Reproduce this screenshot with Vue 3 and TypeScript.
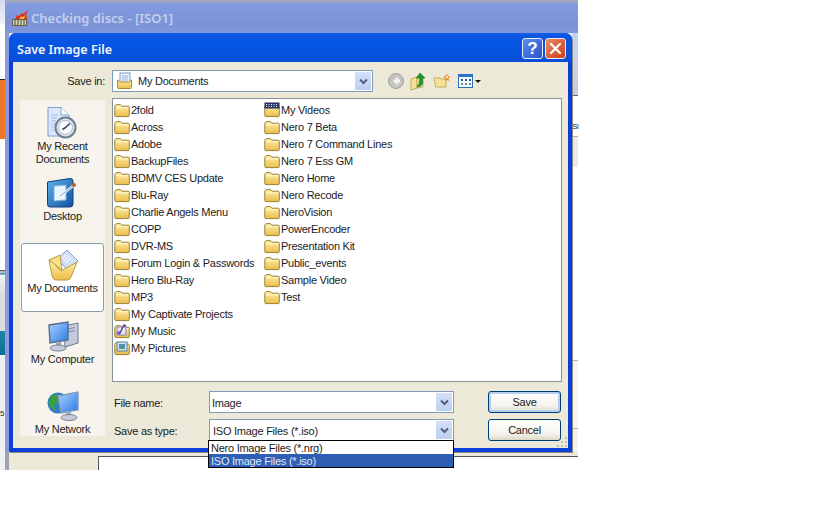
<script setup lang="ts">
type PlaceItem = { key: string; lines: string[]; height: number; active?: boolean };
type FileItem = { name: string; icon: string };

const places: PlaceItem[] = [
  { key: "recent", lines: ["My Recent", "Documents"], height: 70 },
  { key: "desktop", lines: ["Desktop"], height: 72 },
  { key: "docs", lines: ["My Documents"], height: 69, active: true },
  { key: "computer", lines: ["My Computer"], height: 70 },
  { key: "network", lines: ["My Network"], height: 52 },
];

const col = (names: string[]): FileItem[] => names.map((name) => ({ name, icon: "folder" }));

const columnOne: FileItem[] = [
  ...col([
    "2fold", "Across", "Adobe", "BackupFiles", "BDMV CES Update", "Blu-Ray",
    "Charlie Angels Menu", "COPP", "DVR-MS", "Forum Login & Passwords",
    "Hero Blu-Ray", "MP3", "My Captivate Projects",
  ]),
  { name: "My Music", icon: "music" },
  { name: "My Pictures", icon: "pictures" },
];

const columnTwo: FileItem[] = [
  { name: "My Videos", icon: "videos" },
  ...col([
    "Nero 7 Beta", "Nero 7 Command Lines", "Nero 7 Ess GM", "Nero Home", "Nero Recode",
    "NeroVision", "PowerEncoder", "Presentation Kit", "Public_events", "Sample Video", "Test",
  ]),
];

const fileTypes = ["Nero Image Files (*.nrg)", "ISO Image Files (*.iso)"];
</script>

<template>
  <div class="desktop">
    <svg class="defs" width="0" height="0" aria-hidden="true">
      <defs>
        <linearGradient id="fold" x1="0" y1="0" x2="0" y2="1">
          <stop offset="0" stop-color="#fff0a8" />
          <stop offset="1" stop-color="#ebbd4c" />
        </linearGradient>
        <linearGradient id="screen" x1="0" y1="0" x2="1" y2="1">
          <stop offset="0" stop-color="#a8d4ff" />
          <stop offset="1" stop-color="#2a78e4" />
        </linearGradient>
        <linearGradient id="tile" x1="0" y1="0" x2="1" y2="1">
          <stop offset="0" stop-color="#5cb4ec" />
          <stop offset="1" stop-color="#10509c" />
        </linearGradient>
        <symbol id="folder" viewBox="0 0 16 16">
          <path d="M.8 4.5V13.5Q.8 14.6 2 14.6H14.2Q15.3 14.6 15.3 13.5V5.2Q15.3 4.2 14.2 4.2H8L6.5 2.6H2.8L1.2 3.4Z" fill="url(#fold)" stroke="#9a8234" />
          <path d="M2 5.8H14.2" stroke="#fff8d8" />
        </symbol>
      </defs>
    </svg>

    <!-- bits of the window behind, left of the dialog -->
    <div class="strip-left">
      <div class="sl sl-white"></div>
      <div class="sl sl-orange"></div>
      <div class="sl sl-blank"></div>
      <div class="sl sl-grey"></div>
      <div class="sl sl-teal"></div>
      <div class="sl sl-pale"><span>5</span></div>
    </div>

    <div class="backwin">
      <div class="back-top"></div>
      <div class="back-title">
        <svg class="back-icon" width="18" height="18" viewBox="0 0 18 18">
          <path d="M4 10L6 6L8 7L11 4L12 5L17 1L15 6L16 9L15 13H4Z" fill="#e2301a" />
          <path d="M8 11L10 7L11 8.5L14 6L13 11Z" fill="#f8c040" />
          <rect x="1.5" y="10.5" width="14" height="6" fill="#ecd890" stroke="#6a5a40" />
          <path d="M4 11V16M7 11V16M10 11V16M13 11V16" stroke="#54708c" stroke-width="1.4" />
        </svg>
        <span>Checking discs - [ISO1]</span>
      </div>
      <div class="strip-right">
        <div class="sr sr-a"></div>
        <div class="sr sr-b"></div>
        <div class="sr sr-c"><span>Si</span></div>
        <div class="sr sr-d"></div>
        <div class="sr sr-e"></div>
        <div class="sr sr-f"></div>
        <div class="sr sr-g"></div>
      </div>
      <div class="back-box"></div>

      <div class="dialog">
        <div class="titlebar">
          <span class="title">Save Image File</span>
          <div class="cap-buttons">
            <button type="button" class="cap cap-help">?</button>
            <button type="button" class="cap cap-close">
              <svg width="13" height="13" viewBox="0 0 13 13">
                <path d="M2 2L11 11M11 2L2 11" stroke="#fff" stroke-width="2.2" stroke-linecap="round" />
              </svg>
            </button>
          </div>
        </div>

        <div class="client">
          <div class="savein-label">Save in:</div>
          <div class="toolbar">
            <div class="combo combo-look">
              <svg class="look-icon" width="18" height="18" viewBox="0 0 18 18">
                <rect x="4" y="1" width="10" height="11" fill="#eef4ff" stroke="#7d97c8" />
                <path d="M6 4H12M6 6H12M6 8H12" stroke="#9db4dc" />
                <path d="M1.5 8V15.5Q1.5 16.5 2.5 16.5H14.5Q15.5 16.5 15.5 15.5V8L13 10H4Z" fill="url(#fold)" stroke="#a98a3c" />
              </svg>
              <span class="combo-text">My Documents</span>
              <span class="arrow"><svg width="9" height="7" viewBox="0 0 9 7"><path d="M1 1.5L4.5 5L8 1.5" fill="none" stroke="#4d6185" stroke-width="2" /></svg></span>
            </div>
            <div class="tools">
              <svg width="18" height="18" viewBox="0 0 18 18">
                <circle cx="9" cy="9" r="7.5" fill="#c4c4c0" stroke="#a4a4a0" />
                <path d="M10.5 4.5L6 9L10.5 13.5V10.8H13V7.2H10.5Z" fill="#f4f4f0" />
              </svg>
              <svg width="18" height="19" viewBox="0 0 18 19">
                <path d="M1 7L7 5V16L1 18Z" fill="#f6e294" stroke="#c0aa54" />
                <path d="M7 5H13V15L7 16Z" fill="#f8ecb0" stroke="#c0aa54" />
                <path d="M10 1L15 6H12.5V12Q11 14.5 7 15Q10 12 9.5 6H6.5Z" fill="#1f9a2c" stroke="#0c6a1a" stroke-width=".6" />
              </svg>
              <svg width="18" height="16" viewBox="0 0 18 16">
                <path d="M1 5H7L8 6H13V14H2.5Z" fill="#f6e294" stroke="#c8ac60" />
                <path d="M14 0.5L15 3L17.5 3.5L15.5 5.5L16 8L14 7L12 8L12.2 5.5L10.5 3.5L13 3Z" fill="#f08030" />
                <circle cx="14" cy="4.2" r="1.2" fill="#fff4d0" />
              </svg>
              <div class="views">
                <svg width="15" height="14" viewBox="0 0 15 14">
                  <rect x=".5" y=".5" width="14" height="13" fill="#f4f8ff" stroke="#2b6cb8" />
                  <rect x=".5" y=".5" width="14" height="2.5" fill="#2b78c8" />
                  <path d="M3 5h2v2H3zM7 5h2v2H7zM11 5h2v2h-2z" fill="#2f5f9c" />
                  <path d="M3 9h2v2H3zM7 9h2v2H7zM11 9h2v2h-2z" fill="#6a7ea0" />
                </svg>
                <span class="caret"></span>
              </div>
            </div>
          </div>

          <div class="places">
            <div
              v-for="p in places"
              :key="p.key"
              class="place"
              :class="{ active: p.active }"
              :style="{ height: p.height + 'px' }"
            >
              <svg v-if="p.key === 'recent'" width="32" height="32" viewBox="0 0 32 32">
                <path d="M1 0.5H14L22 8V29H1Z" fill="#dce8fa" stroke="#7f9fd0" />
                <path d="M14 0.5V8H22" fill="#fff" stroke="#7f9fd0" />
                <path d="M4 8H11M4 11H10M4 14H9M4 17H8M4 20H7M4 23H7" stroke="#a4c0e8" />
                <circle cx="18.5" cy="20.5" r="10" fill="#dfe6ee" stroke="#6f8094" stroke-width="2" />
                <circle cx="18.5" cy="20.5" r="7" fill="#f8fbff" stroke="#a8b8c8" />
                <path d="M18.5 20.5L23 16.5M18.5 20.5L15.5 22.5" stroke="#33424f" stroke-width="1.6" />
              </svg>
              <svg v-else-if="p.key === 'desktop'" width="32" height="32" viewBox="0 0 32 32">
                <path d="M0.5 5L23 1.5Q26 1.5 26 4V27Q26 30 23 30L3 30Q0.5 30 0.5 27Z" fill="url(#tile)" stroke="#0c3f80" />
                <path d="M7 9L19 8V23L7 24Z" fill="#e8f4ff" stroke="#7fb0dc" />
                <path d="M13 19L26 9" stroke="#f0f4f8" stroke-width="2.6" />
                <path d="M13 19L26 9" stroke="#88a8c8" stroke-width="1" />
                <circle cx="27" cy="8" r="2" fill="#c8602c" />
              </svg>
              <svg v-else-if="p.key === 'docs'" width="32" height="32" viewBox="0 0 32 32">
                <path d="M10 10L20 1L31 12L22 22Z" fill="#cfe0f8" stroke="#7fa0d0" />
                <path d="M15 10L20 5M17 12L22 7M19 14L24 9" stroke="#fff" />
                <path d="M2 11L13 6L15 21Z" fill="#f8e08a" stroke="#b89c44" />
                <path d="M2 11Q7 14 14 22L30 13L24 28Q23 31 20 31H9Q6 31 5 27Z" fill="url(#fold)" stroke="#b89c44" />
              </svg>
              <svg v-else-if="p.key === 'computer'" width="32" height="32" viewBox="0 0 32 32">
                <path d="M17 6L31 3V23L18 27Z" fill="#c4cadc" stroke="#6f7a94" />
                <path d="M21 9L28 7.5M21 12L28 10.5" stroke="#7e8aa8" />
                <path d="M2 5L21 2V20L3 23Z" fill="url(#screen)" stroke="#5a6a88" stroke-width="1.4" />
                <path d="M9 23L14 22V26L9 27Z" fill="#9aa4b8" />
                <ellipse cx="11" cy="28" rx="8" ry="3" fill="#c8ccd8" stroke="#7a8498" />
              </svg>
              <svg v-else-if="p.key === 'network'" width="32" height="32" viewBox="0 0 32 32">
                <circle cx="11" cy="13" r="10.5" fill="#2f7fc8" />
                <path d="M4 6Q11 3 15 6L13 11L7 15L9 21Q3 19 1.5 13Q2 9 4 6Z" fill="#3aa03c" />
                <path d="M11 6L31 2V20L14 23Z" fill="url(#screen)" stroke="#8498b8" stroke-width="1.4" />
                <path d="M19 22L24 21V25L19 26Z" fill="#a0acc0" />
                <ellipse cx="22" cy="27.5" rx="8" ry="3" fill="#c8ccd8" stroke="#7a8498" />
              </svg>
              <div class="place-label">
                <div v-for="l in p.lines" :key="l">{{ l }}</div>
              </div>
            </div>
          </div>

          <div class="main">
            <div class="list">
              <div v-for="(c, i) in [columnOne, columnTwo]" :key="i" class="list-col">
                <div v-for="f in c" :key="f.name" class="file">
                  <svg width="16" height="16" viewBox="0 0 16 16" class="file-icon">
                    <use href="#folder" />
                    <template v-if="f.icon === 'music'">
                      <rect x="3" y="4" width="9" height="8" fill="#e8e4f4" stroke="#8a80b8" />
                      <path d="M6 10L10 2L12 3" fill="none" stroke="#5040a0" stroke-width="1.4" />
                      <circle cx="5" cy="10" r="1.8" fill="#6a50b0" />
                    </template>
                    <template v-else-if="f.icon === 'pictures'">
                      <rect x="3" y="2" width="10" height="9" fill="#cfe4f4" stroke="#5a7898" />
                      <rect x="5" y="4" width="6" height="5" fill="#4f8fc8" />
                      <path d="M5 9L8 6L11 9Z" fill="#5a9a5a" />
                    </template>
                    <template v-else-if="f.icon === 'videos'">
                      <rect x="1" y="1" width="14" height="5" fill="#2a3870" stroke="#20285a" />
                      <path d="M2.5 2V5M5 2V5M7.5 2V5M10 2V5M12.5 2V5" stroke="#f4f4f4" stroke-dasharray="1 1" />
                    </template>
                  </svg>
                  <span>{{ f.name }}</span>
                </div>
              </div>
            </div>

            <div class="form">
              <label class="form-label">File name:</label>
              <div class="combo combo-form">
                <span class="combo-text">Image</span>
                <span class="arrow"><svg width="9" height="7" viewBox="0 0 9 7"><path d="M1 1.5L4.5 5L8 1.5" fill="none" stroke="#4d6185" stroke-width="2" /></svg></span>
              </div>
              <button type="button" class="btn btn-default">Save</button>

              <label class="form-label">Save as type:</label>
              <div class="combo combo-form combo-type">
                <span class="combo-text">ISO Image Files (*.iso)</span>
                <span class="arrow"><svg width="9" height="7" viewBox="0 0 9 7"><path d="M1 1.5L4.5 5L8 1.5" fill="none" stroke="#4d6185" stroke-width="2" /></svg></span>
                <div class="dropdown">
                  <div
                    v-for="(t, i) in fileTypes"
                    :key="t"
                    class="drop-item"
                    :class="{ selected: i === 1 }"
                  >{{ t }}</div>
                </div>
              </div>
              <button type="button" class="btn">Cancel</button>
            </div>
          </div>

          <svg class="grip" width="12" height="12" viewBox="0 0 12 12">
            <path d="M9 1h2v2H9zM5 5h2v2H5zM9 5h2v2H9zM1 9h2v2H1zM5 9h2v2H5zM9 9h2v2H9z" fill="#c4c1b0" />
          </svg>
        </div>
      </div>
    </div>
  </div>
</template>

<style>
html,
body {
  margin: 0;
  background: #fff;
}
</style>

<style scoped>
.desktop {
  position: relative;
  width: 840px;
  height: 525px;
  overflow: hidden;
  background: #fff;
  font-family: "Liberation Sans", Arial, sans-serif;
  font-size: 11px;
  letter-spacing: -0.25px;
  color: #1c1c1c;
}

.defs {
  position: absolute;
}

/* scraps of what is behind */
.strip-left {
  position: absolute;
  left: 0;
  top: 0;
  width: 5px;
  height: 470px;
  display: flex;
  flex-direction: column;
}

.sl-white {
  height: 79px;
  background: linear-gradient(#d4d8ec 0, #f0f0f8 24px, #fff 25px);
}

.sl-orange {
  height: 60px;
  background: #f0762a;
  border-top: 1px solid #222;
  box-sizing: border-box;
}

.sl-blank {
  height: 126px;
  background: #fff;
}

.sl-grey {
  height: 66px;
  background: linear-gradient(#fff 5px, #333 5px, #888 6px, #e0e0e0 7px, #1a7f90 9px, #f0f4f4 10px, #dcdcdc 30px);
}

.sl-teal {
  height: 24px;
  background: linear-gradient(#1c84a4, #0f6f92);
}

.sl-pale {
  flex: 1;
  background: #eef0f4;
  position: relative;
}

.sl-pale span {
  position: absolute;
  left: 0;
  top: 54px;
  font-size: 8px;
  line-height: 10px;
}

.backwin {
  position: absolute;
  left: 5px;
  top: 0;
  width: 573px;
  height: 470px;
  background:
    linear-gradient(90deg, #8b9adb 4px, transparent 4px) 0 0 / 100% 452px no-repeat,
    linear-gradient(90deg, #a0a2ac 4px, transparent 4px) 0 0 / 100% 100% no-repeat,
    #ece9d8;
}

.back-top {
  height: 3px;
  background: linear-gradient(#a4a8b8, #9ca4c8);
}

.back-title {
  height: 30px;
  display: flex;
  align-items: center;
  gap: 2px;
  padding-left: 6px;
  background: linear-gradient(#839be0, #7c93d8 70%, #7f97dc);
  color: #c4d0ec;
  font-family: "Noto Sans", "Open Sans", sans-serif;
  font-size: 13px;
  font-weight: 600;
  letter-spacing: 0;
}

.back-icon {
  flex: none;
}

.strip-right {
  position: absolute;
  right: 0;
  top: 33px;
  width: 6px;
  height: 419px;
  display: flex;
  flex-direction: column;
}

.sr-a {
  height: 25px;
  background: #c4d4ee;
}

.sr-b {
  height: 37px;
  background: linear-gradient(#ccd2e6, #c8ccdc);
  border-bottom: 1px solid #6a6a70;
}

.sr-c {
  height: 40px;
  background: #fff;
  border-bottom: 1px solid #b0b0a8;
  position: relative;
}

.sr-c span {
  position: absolute;
  left: 0;
  top: 26px;
  font-size: 8px;
  line-height: 10px;
}

.sr-d {
  height: 30px;
  background: #ebeae4;
}

.sr-e {
  height: 193px;
  background: #fff;
  border-bottom: 1px solid #b8b8b0;
}

.sr-f {
  height: 67px;
  background: #f6f5ee;
  border-bottom: 1px solid #b8b8b0;
}

.sr-g {
  flex: 1;
  background: #f4f3ec;
}

.back-box {
  position: absolute;
  left: 93px;
  top: 456px;
  width: 480px;
  height: 14px;
  background: #fff;
  border-top: 1px solid #555;
  border-left: 1px solid #555;
  box-sizing: border-box;
}

/* the dialog */
.dialog {
  position: absolute;
  left: 4px;
  top: 33px;
  width: 563px;
  height: 419px;
  box-sizing: border-box;
  border-radius: 7px 7px 0 0;
  background: #0a3fd8;
  display: flex;
  flex-direction: column;
  box-shadow: 1px 1px 0 #8a8a84;
  border: solid #0a3fd8;
  border-width: 0 4px 4px;
}

.titlebar {
  height: 29px;
  margin: 0 -4px;
  padding: 0 6px 0 8px;
  flex: none;
  display: flex;
  align-items: center;
  justify-content: space-between;
  border-radius: 7px 7px 0 0;
  background: linear-gradient(#1660e8 0, #0a54e0 3px, #0556e4 40%, #0a4ed8 100%);
}

.title {
  margin-top: 3px;
  color: #f4f6fc;
  font-family: "Noto Sans", "Open Sans", sans-serif;
  font-size: 12.5px;
  font-weight: 600;
  letter-spacing: 0;
}

.cap-buttons {
  display: flex;
  gap: 2px;
  margin-top: 2px;
}

.cap {
  width: 21px;
  height: 21px;
  padding: 0;
  display: flex;
  align-items: center;
  justify-content: center;
  box-sizing: border-box;
  border: 1px solid #e8eefc;
  border-radius: 3px;
}

.cap-help {
  background: linear-gradient(135deg, #5c8cf0, #2a54c8);
  color: #fff;
  font-family: "Liberation Sans", sans-serif;
  font-size: 17px;
  font-weight: 700;
  line-height: 1;
}

.cap-close {
  background: linear-gradient(135deg, #ea8a64, #d0401c);
}

.client {
  position: relative;
  flex: 1;
  background: #ece9d8;
  display: grid;
  grid-template-columns: 85px 1fr;
  grid-template-rows: 22px 1fr;
  column-gap: 7px;
  row-gap: 6px;
  padding: 8px 6px 0 7px;
  min-height: 0;
}

.savein-label {
  align-self: center;
  text-align: right;
}

.toolbar {
  display: flex;
  align-items: center;
  gap: 14px;
}

.combo {
  position: relative;
  box-sizing: border-box;
  height: 22px;
  display: flex;
  align-items: center;
  background: #fff;
  border: 1px solid #7f9db9;
}

.combo-look {
  width: 261px;
  padding-left: 3px;
}

.look-icon {
  margin-right: 4px;
  flex: none;
}

.combo-text {
  flex: 1;
  white-space: nowrap;
}

.arrow {
  flex: none;
  width: 16px;
  height: 18px;
  margin-right: 1px;
  display: flex;
  align-items: center;
  justify-content: center;
  background: linear-gradient(#d4e0f8, #bccff0);
  border-radius: 1px;
}

.tools {
  display: flex;
  align-items: center;
  gap: 5px;
}

.views {
  display: flex;
  align-items: center;
  gap: 2px;
  margin-left: 2px;
}

.caret {
  width: 0;
  height: 0;
  border: solid transparent;
  border-width: 3px 3px 0;
  border-top-color: #111;
  margin-top: 1px;
}

.places {
  margin-top: 2px;
  height: 336px;
  overflow: hidden;
  background: #f6f4ec;
  box-sizing: border-box;
  display: flex;
  flex-direction: column;
  align-items: center;
  padding-top: 1px;
}

.place {
  flex: none;
  width: 83px;
  box-sizing: border-box;
  display: flex;
  flex-direction: column;
  align-items: center;
  padding-top: 5px;
  border: 1px solid transparent;
  border-radius: 3px;
}

.place.active {
  background: #fff;
  border-color: #8c9ba8;
  margin-bottom: 2px;
}

.place svg {
  flex: none;
}

.place-label {
  margin-top: 1px;
  line-height: 13px;
  text-align: center;
  white-space: nowrap;
}

.main {
  display: flex;
  flex-direction: column;
  min-width: 0;
}

.list {
  box-sizing: border-box;
  height: 284px;
  background: #fff;
  border: 1px solid #84929c;
  display: flex;
  padding: 2px 0 0 1px;
}

.list-col {
  width: 150px;
  display: flex;
  flex-direction: column;
}

.file {
  height: 17px;
  display: flex;
  align-items: center;
  gap: 1px;
  white-space: nowrap;
}

.file-icon {
  flex: none;
}

.form {
  display: grid;
  grid-template-columns: 95px 245px 73px;
  column-gap: 0;
  row-gap: 6px;
  margin-top: 9px;
  padding-left: 2px;
}

.form-label {
  align-self: center;
  padding-top: 1px;
}

.combo-form {
  padding-left: 2px;
}

.combo-form .combo-text {
  padding-top: 1px;
}

.combo-type .combo-text {
  padding-left: 1px;
}

.btn {
  box-sizing: border-box;
  width: 73px;
  height: 22px;
  margin-left: 34px;
  padding: 0;
  border: 1px solid #003c74;
  border-radius: 3px;
  background: linear-gradient(#fff, #f4f3ec 70%, #dcd8c8);
  font: inherit;
  letter-spacing: inherit;
  color: inherit;
}

.btn-default {
  box-shadow: inset 0 0 0 2px #b4cdf0;
}

.dropdown {
  position: absolute;
  left: -2px;
  top: 20px;
  width: 246px;
  box-sizing: border-box;
  height: 28px;
  background: #fff;
  border: 1px solid #000;
  z-index: 2;
}

.drop-item {
  height: 13px;
  line-height: 14px;
  padding-left: 2px;
  white-space: nowrap;
}

.drop-item.selected {
  background: #2f5fb4;
  color: #dfe8f8;
}

.grip {
  position: absolute;
  right: 0;
  bottom: 0;
}
</style>
